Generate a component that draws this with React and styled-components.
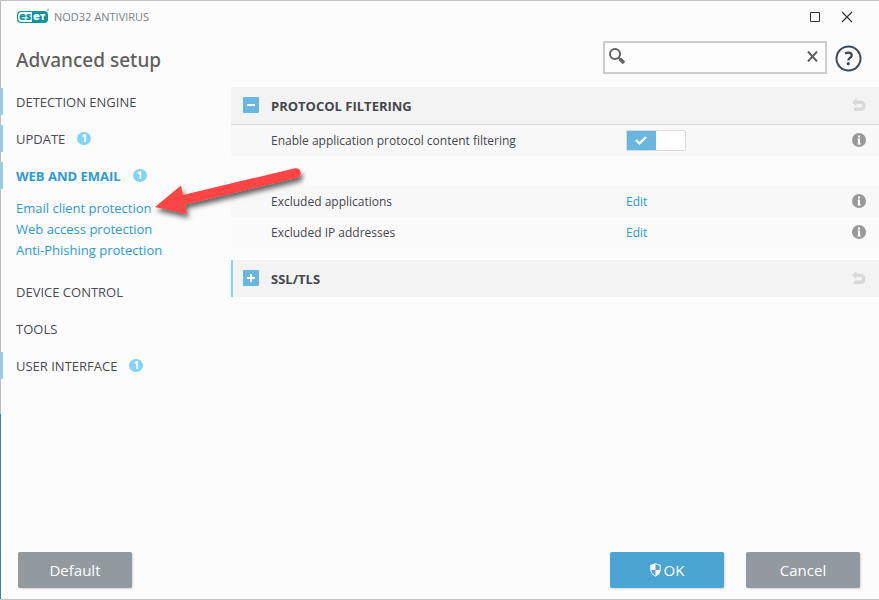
import React, { useState } from 'react';
import styled, { createGlobalStyle, css } from 'styled-components';

const GlobalStyle = createGlobalStyle`
  * {
    box-sizing: border-box;
  }

  body {
    margin: 0;
    background: #fcfcfc;
    color: #44474d;
    font-family: 'Open Sans', 'Noto Sans', sans-serif;
    font-size: 12px;
  }

  button, input {
    font-family: inherit;
  }
`;

const Window = styled.div`
  position: relative;
  display: flex;
  flex-direction: column;
  min-height: 100vh;
  padding-left: 1px;
  border-top: 1px solid #c4c4c4;
  border-bottom: 1px solid #c4c4c4;
  background: linear-gradient(#bdbdbd 69%, #3a81a8 69%) left / 1px 100% no-repeat #fcfcfc;
`;

const TitleBar = styled.div`
  display: flex;
  align-items: center;
  justify-content: space-between;
  height: 32px;
  padding: 0 26px 0 15px;
`;

const Brand = styled.div`
  display: flex;
  align-items: center;
  gap: 5px;
  padding-bottom: 1px;
  color: #7b8186;
  font-size: 11px;
`;

const WindowControls = styled.div`
  display: flex;
  gap: 20px;
`;

const IconButton = styled.button`
  display: flex;
  padding: 0;
  border: 0;
  background: none;
  color: inherit;
  cursor: pointer;
`;

const Header = styled.header`
  display: flex;
  align-items: center;
  justify-content: space-between;
  height: 54px;
  padding: 0 17px 4px 15px;
`;

const Title = styled.h1`
  margin: 0;
  padding-top: 3px;
  color: #60615f;
  font-family: 'Noto Sans', sans-serif;
  font-size: 19px;
  font-weight: 500;
  line-height: 28px;
`;

const HeaderTools = styled.div`
  display: flex;
  align-items: flex-end;
  gap: 8px;
`;

const SearchBox = styled.div`
  display: flex;
  align-items: center;
  width: 224px;
  height: 33px;
  margin-bottom: 2px;
  padding: 0 7px 1px 4px;
  border: 2px solid #cdcdcd;
  background: #fdfdfd;
  color: #626262;
`;

const HelpButton = styled(IconButton)`
  padding-bottom: 4px;
`;

const SearchInput = styled.input`
  flex: 1;
  min-width: 0;
  padding: 0 4px;
  border: 0;
  outline: 0;
  background: transparent;
  font-size: 13px;
`;

const Body = styled.div`
  display: flex;
  flex: 1;
`;

const Sidebar = styled.nav`
  flex: 0 0 230px;
  padding-top: 1px;
`;

const NavItem = styled.a`
  display: flex;
  align-items: center;
  gap: 12px;
  height: 27px;
  margin-bottom: 10px;
  padding-left: 13px;
  border-left: 2px solid ${props => props.$changed ? '#83d3fa' : 'transparent'};
  color: #484b51;
  font-size: 13px;
  text-decoration: none;

  ${props => props.$active && css`
    margin-bottom: 9px;
    color: #2d9ad6;
    font-weight: 700;
  `}
`;

const Badge = styled.span`
  width: 14px;
  height: 13px;
  border-radius: 7px;
  background: #83d3fa;
  color: white;
  font-size: 10px;
  font-weight: 700;
  line-height: 13px;
  text-align: center;
`;

const SubNav = styled.div`
  display: flex;
  flex-direction: column;
  margin-bottom: 17px;
  padding-left: 15px;
`;

const SubLink = styled.a`
  color: #2d9ad6;
  font-size: 13px;
  line-height: 21px;
  text-decoration: none;
`;

const Content = styled.main`
  flex: 1;
  min-width: 0;
`;

const SectionHeader = styled.div`
  display: flex;
  align-items: center;
  height: 37px;
  padding: 0 13px 1px ${props => props.$changed ? '10px' : '12px'};
  border-left: ${props => props.$changed ? '2px solid #83d3fa' : '0'};
  background: #f3f3f3;
  color: #d9d9d9;
`;

const Expander = styled.button`
  display: flex;
  margin-right: 12px;
  padding: 0;
  border: 0;
  border-radius: 1px;
  background: #69b6de;
  color: white;
  cursor: pointer;
`;

const SectionTitle = styled.h2`
  flex: 1;
  margin: 0;
  padding-top: 1px;
  color: #44474d;
  font-size: 13px;
  font-weight: 700;
`;

const Rows = styled.div`
  margin-bottom: 12px;
  border-top: 1px solid #dadada;
`;

const Row = styled.div`
  display: grid;
  grid-template-columns: minmax(0, 355px) 1fr auto;
  align-items: center;
  height: 31px;
  margin-bottom: ${props => props.$last ? '30px' : '0'};
  padding: 0 13px 1px 40px;
  background: ${props => props.$shaded ? '#f8f8f8' : '#fbfbfb'};
  color: #44474d;
`;

const EditLink = styled.a`
  color: #2d9ad6;
  text-decoration: none;
`;

const Switch = styled.label`
  position: relative;
  display: flex;
  justify-content: ${props => props.$on ? 'flex-start' : 'flex-end'};
  width: 60px;
  height: 21px;
  border: 1px solid #dadada;
  border-radius: 1px;
  background: white;
  cursor: pointer;
`;

const SwitchInput = styled.input`
  position: absolute;
  inset: 0;
  width: 100%;
  height: 100%;
  margin: 0;
  opacity: 0;
  cursor: pointer;
`;

const SwitchKnob = styled.span`
  display: flex;
  align-items: center;
  justify-content: center;
  width: 29px;
  padding-right: 2px;
  background: ${props => props.$on ? '#69b6de' : '#c4c4c4'};
`;

const Footer = styled.footer`
  display: flex;
  gap: 22px;
  padding: 0 19px 11px 17px;
`;

const Button = styled.button`
  display: flex;
  align-items: center;
  justify-content: center;
  gap: 3px;
  width: 114px;
  height: 36px;
  margin-right: ${props => props.$left ? 'auto' : '0'};
  padding: 0;
  border: 0;
  border-radius: 2px;
  background: ${props => props.$primary ? '#4aa5d3' : '#92999f'};
  box-shadow: 1px 1px 2px rgba(0, 0, 0, 0.15);
  color: white;
  font-size: 15px;
  cursor: pointer;
`;

const Pointer = styled.svg`
  position: absolute;
  top: 159px;
  left: 150px;
  pointer-events: none;
`;

const Logo = () => (
  <svg width="33" height="20" viewBox="0 -3 33 20" role="img" aria-label="eset">
    <rect x="1" y="1" width="31" height="12" rx="4" fill="#0b949c" />
    <path d="M5.500 2H16v10H5.500Q2 12 2 7T5.500 2z" fill="#fff" />
    <g fontFamily="Open Sans, sans-serif" fontSize="11" fontWeight="800">
      <text x="3" y="10" fill="#0b949c">es</text>
      <text x="17" y="10" fill="#fff">e</text>
      <text x="24" y="10" fontSize="9" fill="#fff">T</text>
    </g>
    <circle cx="32" cy="0" r="1" fill="none" stroke="#63b9bd" strokeWidth=".6" />
  </svg>
);

const MaximizeIcon = () => (
  <svg width="12" height="12" viewBox="0 0 12 12" fill="none" stroke="#333">
    <path d="M1.500 1.500h9v9h-9z" />
  </svg>
);

const CloseIcon = () => (
  <svg width="12" height="12" viewBox="0 0 12 12" fill="none" stroke="#333" strokeWidth="1.200">
    <path d="M1 1l10 10M11 1L1 11" />
  </svg>
);

const SearchIcon = () => (
  <svg width="17" height="17" viewBox="0 0 17 17" fill="none" stroke="currentColor">
    <circle cx="6" cy="6" r="5" strokeWidth="2" />
    <path d="M9.500 9.500l2 2" strokeWidth="2" />
    <path d="M11 11l4 4" strokeWidth="3.600" />
  </svg>
);

const ClearIcon = () => (
  <svg width="11" height="11" viewBox="0 0 11 11" fill="none" stroke="currentColor" strokeWidth="2">
    <path d="M1 .5l9 10M10 .5l-9 10" />
  </svg>
);

const HelpIcon = () => (
  <svg width="27" height="27" viewBox="0 0 27 27" fill="none" stroke="#3d4955">
    <circle cx="13.500" cy="13.500" r="12" strokeWidth="2" />
    <path d="M10 8.600q1.700-1 3.500-1 3.200 0 3.200 2.700 0 1.500-1.600 2.500-1.800 1.100-1.800 2.800" strokeWidth="2.300" />
    <circle cx="13.300" cy="18.700" r="1.600" fill="#3d4955" stroke="none" />
  </svg>
);

const RevertIcon = () => (
  <svg width="14" height="14" viewBox="0 0 14 14" fill="currentColor">
    <path d="M0 4.500L4.500 0v2.500H9a4.500 5.250 0 0 1 0 10.500H2V9.500h6.500a1.500 1.500 0 0 0 0-3.500h-4v2.500z" />
  </svg>
);

const InfoIcon = () => (
  <svg width="14" height="14" viewBox="0 0 14 14">
    <circle cx="7" cy="7" r="7" fill="#999" />
    <path d="M6 2.500h2v2H6zM5.500 5.500H8v5h1v1H5.500v-1H6v-4h-.5z" fill="#fff" />
  </svg>
);

const CheckIcon = () => (
  <svg width="12" height="9" viewBox="0 0 12 9" fill="none" stroke="#fff" strokeWidth="2.200">
    <path d="M1 4l3.500 3.500L11 1" />
  </svg>
);

const ShieldIcon = () => (
  <svg width="11" height="14" viewBox="0 0 11 14">
    <path d="M5.500.5q2 1.500 4.700 1.600V7q0 4-4.700 6.300Q.8 11 .8 7V2.100Q3.500 2 5.500.5z" fill="#4aa5d3" stroke="#fff" />
    <path d="M5.500.5V7H.8V2.100Q3.500 2 5.500.5zM5.500 7h4.700q0 4-4.700 6.300z" fill="#fff" />
  </svg>
);

const ExpandIcon = ({ open }) => (
  <svg width="16" height="16" viewBox="0 0 16 16" fill="none" stroke="currentColor" strokeWidth="2">
    <path d={open ? 'M4 8h8' : 'M4 8h8M8 4v8'} />
  </svg>
);

const Section = ({ title, open, changed, children }) => (
  <section>
    <SectionHeader $changed={changed}>
      <Expander type="button" aria-label={title} aria-expanded={open}>
        <ExpandIcon open={open} />
      </Expander>
      <SectionTitle>{title}</SectionTitle>
      <IconButton type="button" aria-label="Revert"><RevertIcon /></IconButton>
    </SectionHeader>
    { open && <Rows>{children}</Rows> }
  </section>
);

const Info = () => (
  <IconButton type="button" aria-label="Info"><InfoIcon /></IconButton>
);

const App = () => {
  const [filtering, setFiltering] = useState(true);
  const [query, setQuery] = useState('');

  return (
    <Window>
      <GlobalStyle />
      <TitleBar>
        <Brand><Logo />NOD32 ANTIVIRUS</Brand>
        <WindowControls>
          <IconButton type="button" aria-label="Maximize"><MaximizeIcon /></IconButton>
          <IconButton type="button" aria-label="Close"><CloseIcon /></IconButton>
        </WindowControls>
      </TitleBar>

      <Header>
        <Title>Advanced setup</Title>
        <HeaderTools>
          <SearchBox>
            <SearchIcon />
            <SearchInput aria-label="Search" value={query} onChange={e => setQuery(e.target.value)} />
            <IconButton type="button" aria-label="Clear" onClick={() => setQuery('')}><ClearIcon /></IconButton>
          </SearchBox>
          <HelpButton type="button" aria-label="Help"><HelpIcon /></HelpButton>
        </HeaderTools>
      </Header>

      <Body>
        <Sidebar>
          <NavItem href="#detection" $changed>DETECTION ENGINE</NavItem>
          <NavItem href="#update" $changed>UPDATE<Badge>1</Badge></NavItem>
          <NavItem href="#web" $changed $active>WEB AND EMAIL<Badge>1</Badge></NavItem>
          <SubNav>
            <SubLink href="#email-client">Email client protection</SubLink>
            <SubLink href="#web-access">Web access protection</SubLink>
            <SubLink href="#anti-phishing">Anti-Phishing protection</SubLink>
          </SubNav>
          <NavItem href="#device">DEVICE CONTROL</NavItem>
          <NavItem href="#tools">TOOLS</NavItem>
          <NavItem href="#interface" $changed>USER INTERFACE<Badge>1</Badge></NavItem>
        </Sidebar>

        <Content>
          <Section title="PROTOCOL FILTERING" open>
            <Row $shaded $last>
              <label htmlFor="filtering">Enable application protocol content filtering</label>
              <Switch $on={filtering}>
                <SwitchKnob $on={filtering}>{ filtering && <CheckIcon /> }</SwitchKnob>
                <SwitchInput
                  id="filtering"
                  type="checkbox"
                  checked={filtering}
                  onChange={e => setFiltering(e.target.checked)}
                />
              </Switch>
              <Info />
            </Row>
            <Row $shaded>
              <span>Excluded applications</span>
              <span><EditLink href="#applications">Edit</EditLink></span>
              <Info />
            </Row>
            <Row>
              <span>Excluded IP addresses</span>
              <span><EditLink href="#addresses">Edit</EditLink></span>
              <Info />
            </Row>
          </Section>
          <Section title="SSL/TLS" open={false} changed />
        </Content>
      </Body>

      <Footer>
        <Button type="button" $left>Default</Button>
        <Button type="button" $primary><ShieldIcon />OK</Button>
        <Button type="button">Cancel</Button>
      </Footer>

      <Pointer width="160" height="70" viewBox="0 0 160 70" aria-hidden="true">
        <defs>
          <filter id="shadow" x="-10%" y="-20%" width="120%" height="160%">
            <feDropShadow dx="2" dy="4" stdDeviation="2.500" floodOpacity="0.6" />
          </filter>
        </defs>
        <path
          d="M5 47L31 25.500l2 9.500L145 8.200a5 5 0 0 1 2.500 9.600L35 44.500l2 9.500z"
          fill="#fd4444"
          filter="url(#shadow)"
        />
      </Pointer>
    </Window>
  );
};

export default App;
